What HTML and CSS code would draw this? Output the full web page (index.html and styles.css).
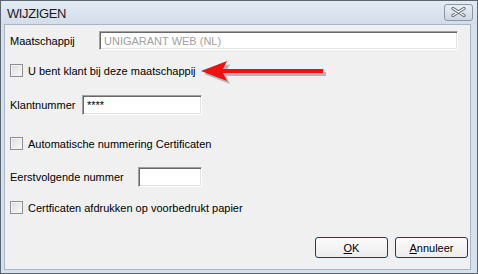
FILE: index.html
```html
<!DOCTYPE html>
<html>
<head>
<meta charset="utf-8">
<link rel="stylesheet" href="styles.css">
</head>
<body>
<div class="window">
  <div class="titlebar">
    <span class="title">WIJZIGEN</span>
    <span class="close">
      <svg width="17" height="10" viewBox="0 0 17 10"><path d="M3 1.5 L14 8.5 M14 1.5 L3 8.5" stroke="#5a6470" stroke-width="3.2" stroke-linecap="round"/><path d="M3 1.5 L14 8.5 M14 1.5 L3 8.5" stroke="#ffffff" stroke-width="1.4" stroke-linecap="round"/></svg>
    </span>
  </div>
  <div class="client">
    <div class="row r1">
      <label class="lbl w89">Maatschappij</label>
      <div class="field wide disabled">UNIGARANT WEB (NL)</div>
    </div>
    <div class="row r2">
      <span class="check"></span><span class="ctext">U bent klant bij deze maatschappij</span>
    </div>
    <div class="row r3">
      <label class="lbl w72">Klantnummer</label>
      <div class="field f2">****</div>
    </div>
    <div class="row r4">
      <span class="check"></span><span class="ctext">Automatische nummering Certificaten</span>
    </div>
    <div class="row r5">
      <label class="lbl w128">Eerstvolgende nummer</label>
      <div class="field f3"></div>
    </div>
    <div class="row r6">
      <span class="check"></span><span class="ctext">Certficaten afdrukken op voorbedrukt papier</span>
    </div>
    <div class="buttons">
      <button class="btn"><u>O</u>K</button>
      <button class="btn"><u>A</u>nnuleer</button>
    </div>
    <svg class="arrow" width="140" height="30" viewBox="0 0 140 30">
      <g transform="translate(3,3)" fill="#9a9a9a" opacity="0.7">
        <path d="M1 11 L27 1 L23 9 L123 9 L123 13 L23 13 L27 21 Z"/>
      </g>
      <path d="M1 11 L27 1 L23 9 L123 9 L123 13 L23 13 L27 21 Z" fill="#ee1111"/>
    </svg>
  </div>
</div>
</body>
</html>
```
FILE: styles.css
```css
html, body {
  margin: 0;
  padding: 0;
}
body {
  width: 478px;
  height: 274px;
  overflow: hidden;
  font-family: "Liberation Sans", Arial, sans-serif;
  font-size: 11px;
  color: #000;
}
.window {
  position: relative;
  width: 478px;
  height: 274px;
  box-sizing: border-box;
  border: 1px solid #5c6673;
  background: #d6e0ec;
  display: flex;
  flex-direction: column;
  padding: 0 6px 3px 3px;
}
.titlebar {
  height: 23px;
  display: flex;
  align-items: center;
  justify-content: space-between;
  background: linear-gradient(#e3eaf3, #d3deea);
  margin: 0 -6px 0 -3px;
  padding: 0 4px 0 6px;
}
.title {
  font-family: "Liberation Sans", Arial, sans-serif;
  font-size: 13px;
  color: #1b1b1b;
  letter-spacing: -0.4px;
  margin-top: 1px;
}
.close {
  width: 27px;
  height: 15px;
  border: 1px solid #8a97a6;
  border-radius: 3px;
  background: linear-gradient(#e8eef5, #ccd7e3);
  display: flex;
  align-items: center;
  justify-content: center;
  margin-top: -1px;
}
.client {
  position: relative;
  flex: 1;
  background: #f0f0f0;
  border: 1px solid #a9b6c4;
  display: flex;
  flex-direction: column;
  padding: 0 2px 0 5px;
}
.row {
  display: flex;
  align-items: center;
}
.r1 { margin-top: 6px; height: 19px; }
.r2 { margin-top: 14px; height: 13px; }
.r3 { margin-top: 18px; height: 20px; }
.r4 { margin-top: 22px; height: 13px; }
.r5 { margin-top: 17px; height: 20px; }
.r6 { margin-top: 14px; height: 13px; }
.lbl { flex: none; }
.w89 { width: 89px; }
.w72 { width: 72px; }
.w128 { width: 128px; }
.field {
  box-sizing: border-box;
  height: 100%;
  background: #fff;
  border-top: 1px solid #a0a0a0;
  border-left: 1px solid #a0a0a0;
  border-right: 1px solid #ffffff;
  border-bottom: 1px solid #ffffff;
  box-shadow: inset 1px 1px 0 #696969, inset -1px -1px 0 #e3e3e3;
  padding: 3px 0 0 4px;
  font-size: 11px;
  line-height: 12px;
}
.wide { width: 359px; }
.disabled { color: #a0a0a0; background: #fff; }
.f2 { width: 120px; }
.f3 { width: 64px; }
.check {
  width: 13px;
  height: 13px;
  box-sizing: border-box;
  border: 1px solid #8e8f8f;
  background: linear-gradient(135deg, #dcdcdc, #fafafa);
  box-shadow: inset 0 0 0 1px #f4f4f4;
  flex: none;
}
.ctext { margin-left: 5px; }
.buttons {
  margin-top: 23px;
  display: flex;
  justify-content: flex-end;
  gap: 7px;
}
.btn {
  width: 73px;
  height: 21px;
  box-sizing: border-box;
  border: 1px solid #1c3d66;
  border-radius: 3px;
  background: linear-gradient(#fbfbfb, #ececec);
  font-family: "Liberation Sans", Arial, sans-serif;
  font-size: 11px;
  color: #000;
  padding: 0;
}
.btn u { text-decoration: underline; }
.arrow {
  position: absolute;
  left: 195px;
  top: 35px;
}
```
